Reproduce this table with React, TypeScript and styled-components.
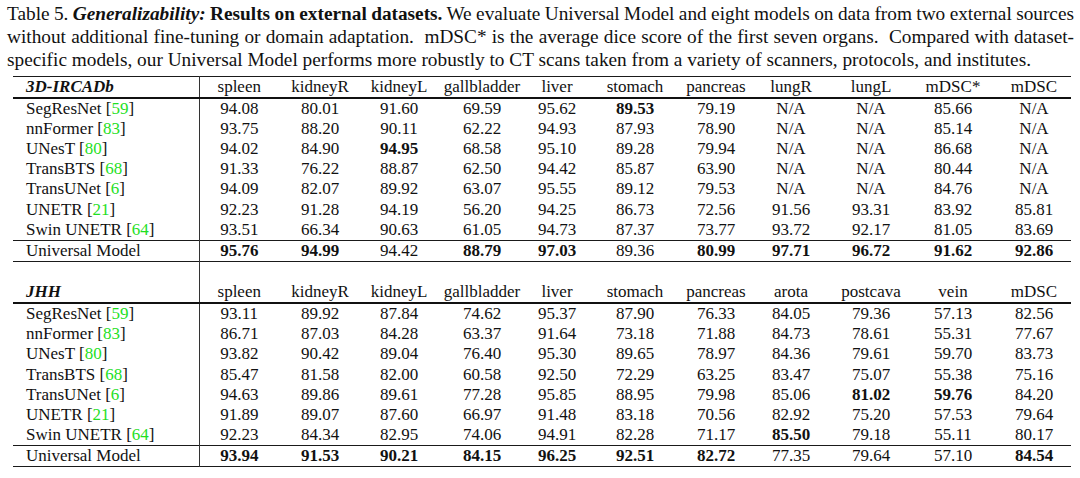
import React from "react";
import styled, { createGlobalStyle } from "styled-components";

type Block = {
  title: string;
  cols: string[];
  rows: { name: string; cite: string; values: string[] }[];
  universal: string[];
};

// a leading "!" marks a bold (best) value
const blocks: Block[] = [
  {
    title: "3D-IRCADb",
    cols: ["spleen", "kidneyR", "kidneyL", "gallbladder", "liver", "stomach", "pancreas", "lungR", "lungL", "mDSC*", "mDSC"],
    rows: [
      { name: "SegResNet", cite: "59", values: ["94.08", "80.01", "91.60", "69.59", "95.62", "!89.53", "79.19", "N/A", "N/A", "85.66", "N/A"] },
      { name: "nnFormer", cite: "83", values: ["93.75", "88.20", "90.11", "62.22", "94.93", "87.93", "78.90", "N/A", "N/A", "85.14", "N/A"] },
      { name: "UNesT", cite: "80", values: ["94.02", "84.90", "!94.95", "68.58", "95.10", "89.28", "79.94", "N/A", "N/A", "86.68", "N/A"] },
      { name: "TransBTS", cite: "68", values: ["91.33", "76.22", "88.87", "62.50", "94.42", "85.87", "63.90", "N/A", "N/A", "80.44", "N/A"] },
      { name: "TransUNet", cite: "6", values: ["94.09", "82.07", "89.92", "63.07", "95.55", "89.12", "79.53", "N/A", "N/A", "84.76", "N/A"] },
      { name: "UNETR", cite: "21", values: ["92.23", "91.28", "94.19", "56.20", "94.25", "86.73", "72.56", "91.56", "93.31", "83.92", "85.81"] },
      { name: "Swin UNETR", cite: "64", values: ["93.51", "66.34", "90.63", "61.05", "94.73", "87.37", "73.77", "93.72", "92.17", "81.05", "83.69"] },
    ],
    universal: ["!95.76", "!94.99", "94.42", "!88.79", "!97.03", "89.36", "!80.99", "!97.71", "!96.72", "!91.62", "!92.86"],
  },
  {
    title: "JHH",
    cols: ["spleen", "kidneyR", "kidneyL", "gallbladder", "liver", "stomach", "pancreas", "arota", "postcava", "vein", "mDSC"],
    rows: [
      { name: "SegResNet", cite: "59", values: ["93.11", "89.92", "87.84", "74.62", "95.37", "87.90", "76.33", "84.05", "79.36", "57.13", "82.56"] },
      { name: "nnFormer", cite: "83", values: ["86.71", "87.03", "84.28", "63.37", "91.64", "73.18", "71.88", "84.73", "78.61", "55.31", "77.67"] },
      { name: "UNesT", cite: "80", values: ["93.82", "90.42", "89.04", "76.40", "95.30", "89.65", "78.97", "84.36", "79.61", "59.70", "83.73"] },
      { name: "TransBTS", cite: "68", values: ["85.47", "81.58", "82.00", "60.58", "92.50", "72.29", "63.25", "83.47", "75.07", "55.38", "75.16"] },
      { name: "TransUNet", cite: "6", values: ["94.63", "89.86", "89.61", "77.28", "95.85", "88.95", "79.98", "85.06", "!81.02", "!59.76", "84.20"] },
      { name: "UNETR", cite: "21", values: ["91.89", "89.07", "87.60", "66.97", "91.48", "83.18", "70.56", "82.92", "75.20", "57.53", "79.64"] },
      { name: "Swin UNETR", cite: "64", values: ["92.23", "84.34", "82.95", "74.06", "94.91", "82.28", "71.17", "!85.50", "79.18", "55.11", "80.17"] },
    ],
    universal: ["!93.94", "!91.53", "!90.21", "!84.15", "!96.25", "!92.51", "!82.72", "77.35", "79.64", "57.10", "!84.54"],
  },
];

const colWidths = [186, 80, 82, 76, 90, 60, 96, 66, 84, 76, 88, 74];

export default function App() {
  return (
    <>
      <GlobalStyle />
      <Page>
        <Caption>
          <CaptionLine $justify $tight>
            Table 5. <BoldItalic>Generalizability:</BoldItalic> <Bold>Results on external datasets.</Bold> We
            evaluate Universal Model and eight models on data from two external sources
          </CaptionLine>
          <CaptionLine $justify>
            without additional fine-tuning or domain adaptation. &nbsp;mDSC* is the average dice score of the
            first seven organs. &nbsp;Compared with dataset-
          </CaptionLine>
          <CaptionLine>
            specific models, our Universal Model performs more robustly to CT scans taken from a variety of
            scanners, protocols, and institutes.
          </CaptionLine>
        </Caption>
        <Table>
          <colgroup>
            {colWidths.map((w, i) => (
              <col key={i} style={{ width: w }} />
            ))}
          </colgroup>
          {blocks.map((block, bi) => (
            <tbody key={block.title}>
              {bi > 0 && (
                <SpacerRow>
                  <NameCell />
                  <td colSpan={11} />
                </SpacerRow>
              )}
              <HeadRow>
                <NameCell>
                  <BoldItalic>{block.title}</BoldItalic>
                </NameCell>
                {block.cols.map((c) => (
                  <Cell key={c}>{c}</Cell>
                ))}
              </HeadRow>
              {block.rows.map((r) => (
                <Row key={r.name}>
                  <NameCell>
                    {r.name} [<Cite>{r.cite}</Cite>]
                  </NameCell>
                  {r.values.map((v, i) => (
                    <Cell key={i} $bold={v.startsWith("!")}>
                      {v.replace("!", "")}
                    </Cell>
                  ))}
                </Row>
              ))}
              <TotalRow>
                <NameCell>Universal Model</NameCell>
                {block.universal.map((v, i) => (
                  <Cell key={i} $bold={v.startsWith("!")}>
                    {v.replace("!", "")}
                  </Cell>
                ))}
              </TotalRow>
            </tbody>
          ))}
        </Table>
      </Page>
    </>
  );
}

const GlobalStyle = createGlobalStyle`
  body {
    margin: 0;
    background: #ffffff;
    color: #111111;
    font-family: "Liberation Serif", "Times New Roman", serif;
  }
`;

const Page = styled.div`
  width: 1080px;
  height: 478px;
  padding: 2px 6px 0 7px;
  box-sizing: border-box;
  overflow: hidden;
`;

const Caption = styled.div`
  font-size: 19.3px;
  line-height: 23px;
  margin-bottom: 5px;
`;

const CaptionLine = styled.div<{ $justify?: boolean; $tight?: boolean }>`
  white-space: nowrap;
  word-spacing: ${({ $tight }) => ($tight ? "-1.2px" : "0")};
  text-align: ${({ $justify }) => ($justify ? "justify" : "left")};
  text-align-last: ${({ $justify }) => ($justify ? "justify" : "left")};
`;

const Bold = styled.b`
  font-weight: 700;
`;

const BoldItalic = styled.b`
  font-weight: 700;
  font-style: italic;
`;

const Table = styled.table`
  margin-left: 6px;
  width: 1058px;
  table-layout: fixed;
  border-collapse: collapse;
  border-top: 1px solid #1a1a1a;
  font-size: 17px;
`;

const Row = styled.tr`
  height: 20.15px;
  line-height: 20px;
`;

const HeadRow = styled.tr`
  height: 21px;
  line-height: 20px;
  border-bottom: 2px solid #111111;
`;

const TotalRow = styled.tr`
  height: 21px;
  line-height: 20px;
  border-top: 1px solid #1a1a1a;
  border-bottom: 1px solid #1a1a1a;
`;

const SpacerRow = styled.tr`
  height: 21px;
`;

const NameCell = styled.td`
  padding: 0 0 0 13px;
  border-right: 1px solid #333333;
  white-space: nowrap;
  text-align: left;
`;

const Cell = styled.td<{ $bold?: boolean }>`
  padding: 0;
  text-align: center;
  white-space: nowrap;
  font-weight: ${({ $bold }) => ($bold ? 700 : 400)};
`;

const Cite = styled.span`
  color: #1fe01f;
`;
